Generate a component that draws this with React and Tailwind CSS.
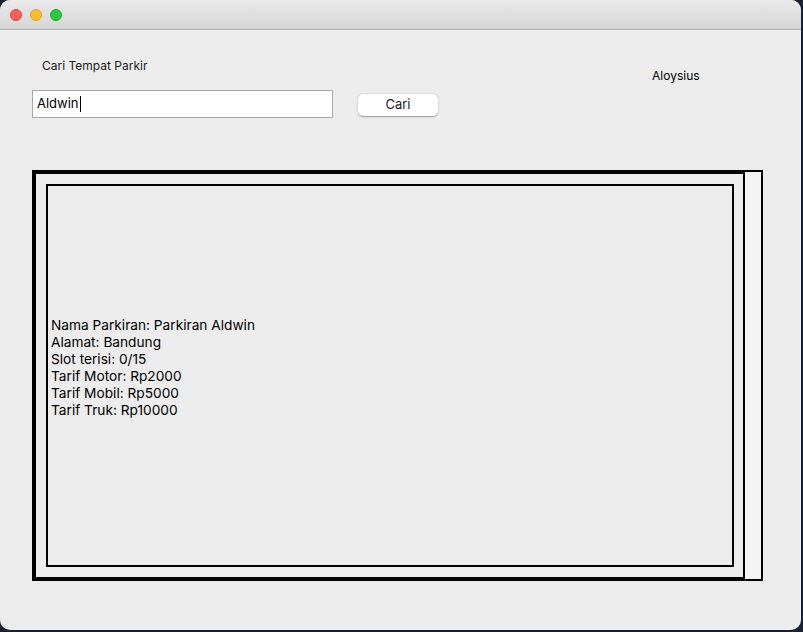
export default function App() {
  return (
    <div className="w-[803px] h-[632px] bg-[#1d2030] overflow-hidden" style={{ fontFamily: 'Inter, "Liberation Sans", sans-serif' }}>
      <div className="w-[801px] h-[630px] rounded-[10px] overflow-hidden bg-[#ececec] flex flex-col">
        {/* title bar */}
        <div className="h-[30px] shrink-0 bg-gradient-to-b from-[#e9e9e9] to-[#d5d5d5] border-b border-[#b3b3b3] flex items-center gap-[8px] pl-[10px]">
          <span className="w-[12px] h-[12px] rounded-full bg-[#fe5f57] border border-[#e0443e]" />
          <span className="w-[12px] h-[12px] rounded-full bg-[#febc2e] border border-[#dea123]" />
          <span className="w-[12px] h-[12px] rounded-full bg-[#28c840] border border-[#1aab29]" />
        </div>

        <div className="relative flex-1">
          <div className="flex">
            <div className="pl-[32px] pt-[28px]">
              <div className="pl-[10px] text-[12px] leading-[16px] text-[#1a1a1a]">Cari Tempat Parkir</div>
              <div className="mt-[16px] flex items-start">
                <div className="w-[301px] h-[28px] bg-white border border-[#a9a9a9] flex items-center pl-[4px] text-[13px] text-black">
                  Aldwin<span className="inline-block w-px h-[16px] bg-black ml-px" />
                </div>
                <button className="ml-[25px] mt-[4px] w-[80px] h-[22px] rounded-[5px] bg-white text-[13px] text-[#222] shadow-[0_0.5px_1.5px_rgba(0,0,0,0.35)]">
                  Cari
                </button>
              </div>
            </div>
            <div className="ml-[214px] pt-[38px] text-[12px] leading-[16px] text-black">Aloysius</div>
          </div>

          {/* scroll pane */}
          <div className="ml-[32px] mt-[52px] flex h-[411px]">
            <div className="w-[713px] border-4 border-r-2 border-black pl-[10px] pt-[10px]">
              <div className="w-[688px] h-[383px] border-2 border-black pl-[3px] pt-[131px] text-[13.7px] leading-[17px] text-black">
                <div>Nama Parkiran: Parkiran Aldwin</div>
                <div>Alamat: Bandung</div>
                <div>Slot terisi: 0/15</div>
                <div>Tarif Motor: Rp2000</div>
                <div>Tarif Mobil: Rp5000</div>
                <div>Tarif Truk: Rp10000</div>
              </div>
            </div>
            <div className="w-[18px] h-[411px] border-y-2 border-r-2 border-black bg-[#f3f3f3]" />
          </div>
        </div>
      </div>
    </div>
  );
}
